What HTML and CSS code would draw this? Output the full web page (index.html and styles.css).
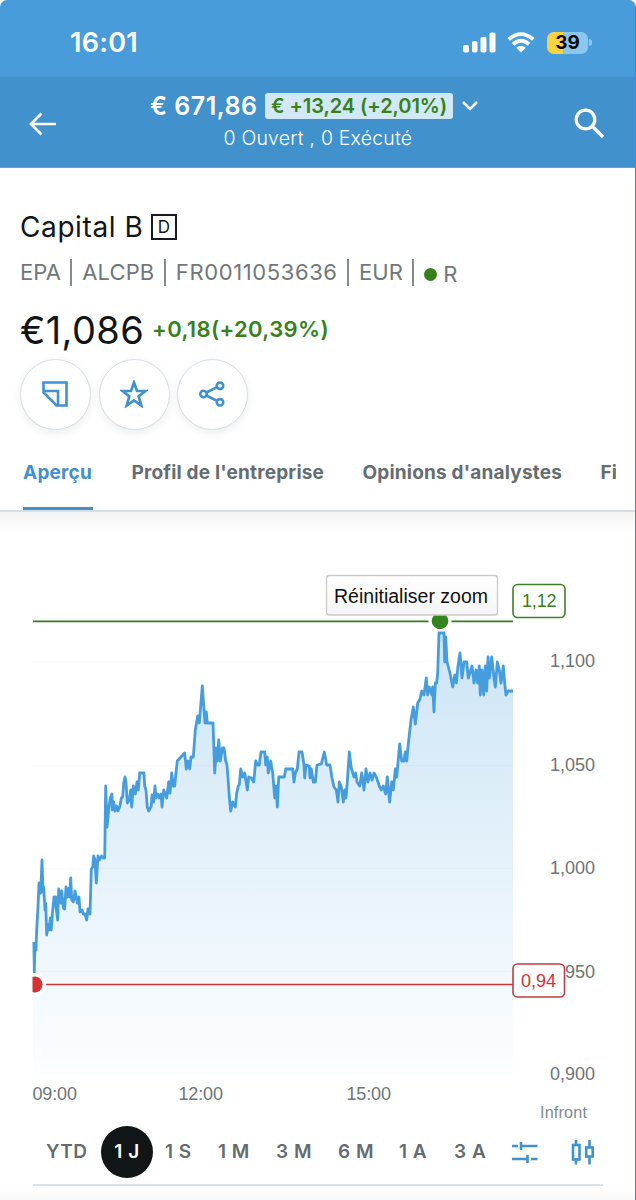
FILE: index.html
```html
<!DOCTYPE html>
<html lang="fr">
<head>
<meta charset="utf-8">
<title>Capital B</title>
<link rel="stylesheet" href="styles.css">
</head>
<body>
<div class="phone">
  <div class="statusbar">
    <span class="clock">16:01</span>
    <div class="indicators">
      <svg class="signal" width="33" height="21" viewBox="0 0 33 21" fill="#fff"><rect x="0" y="13" width="6" height="7.500" rx="1.800"/><rect x="9" y="9" width="5.500" height="11.500" rx="1.800"/><rect x="17.500" y="5" width="6" height="15.500" rx="1.800"/><rect x="26.500" y="0.500" width="6" height="20" rx="1.800"/></svg>
      <svg class="wifi" width="28" height="21" viewBox="0 0 28 21" fill="none" stroke="#fff" stroke-width="3.800"><path d="M1.700 7.400Q14-3.200 26.300 7.400"/><path d="M6 12.200Q14 5.200 22 12.200"/><path d="M14 20.500L9.200 15.800Q14 11.900 18.800 15.800Z" fill="#fff" stroke="none"/></svg>
      <div class="battery"><span>39</span></div>
      <i class="battery-tip"></i>
    </div>
  </div>
  <header class="account">
    <svg class="back" width="28" height="24" viewBox="0 0 28 24" fill="none" stroke="#fff" stroke-width="2.700"><path d="M27 12H2M12.500 1.500L2 12L12.500 22.500"/></svg>
    <div class="balance">
      <div class="balance-row"><span class="amount">€ 671,86</span><span class="gain">€ +13,24 (+2,01%)</span>
        <svg width="16" height="10" viewBox="0 0 16 10" fill="none" stroke="#fff" stroke-width="2.500"><path d="M1 1L8 8L15 1"/></svg>
      </div>
      <div class="orders">0 Ouvert , 0 Exécuté</div>
    </div>
    <svg class="search" width="31" height="31" viewBox="0 0 31 31" fill="none" stroke="#fff" stroke-width="3.200"><circle cx="11.500" cy="11.500" r="9.300"/><path d="M18 18L29 29"/></svg>
  </header>

  <section class="quote">
    <div class="name-row"><h1>Capital B</h1><span class="doc">D</span></div>
    <div class="meta"><span>EPA</span><i></i><span class="ticker">ALCPB</span><i></i><span class="isin">FR0011053636</span><i></i><span>EUR</span><i></i><b></b><span class="rt">R</span></div>
    <div class="price-row"><span class="price">€1,086</span><span class="change">+0,18(+20,39%)</span></div>
    <div class="actions">
      <button><svg width="26" height="26" viewBox="0 0 26 26" fill="none" stroke="#3f91cf" stroke-width="2.600"><path d="M1.500 1.500H24.500V24.500H14.500L1.500 11.500Z"/><path d="M1.500 10H16V24.500"/></svg></button>
      <button><svg width="28" height="28" viewBox="0 0 28 28" fill="none" stroke="#3f91cf" stroke-width="2.700"><path d="M14 2.500L17 11H25.500L18.700 16.300L21.300 25.500L14 20.300L6.700 25.500L9.300 16.300L2.500 11H11Z"/></svg></button>
      <button><svg width="26" height="26" viewBox="0 0 26 26" fill="none" stroke="#3f91cf" stroke-width="2.600"><circle cx="4.500" cy="13" r="3.200"/><circle cx="21" cy="4.700" r="3.200"/><circle cx="21" cy="21.300" r="3.200"/><path d="M7.400 11.500L18.100 6.200M7.400 14.500L18.100 19.800"/></svg></button>
    </div>
  </section>

  <nav class="tabs">
    <a class="active">Aperçu</a><a class="company">Profil de l'entreprise</a><a class="analysts">Opinions d'analystes</a><a class="cut">Fi</a>
  </nav>

  <section class="chart">
    <svg width="636" height="611" viewBox="0 512 636 611">
      <defs>
        <linearGradient id="area" gradientUnits="userSpaceOnUse" x1="0" y1="620" x2="0" y2="1075"><stop offset="0" stop-color="#cbe4f5"/><stop offset="1" stop-color="#fcfeff"/></linearGradient>
        <linearGradient id="btn" x1="0" y1="0" x2="0" y2="1"><stop offset="0" stop-color="#fff"/><stop offset="1" stop-color="#f5f5f6"/></linearGradient>
        <clipPath id="plot"><rect x="32.500" y="560" width="480.500" height="520"/></clipPath>
      </defs>
      <g clip-path="url(#plot)">
        <path id="fill" fill="url(#area)"/>
        <path d="M33 661.500H513M33 765.500H513M33 868.500H513M33 971.500H513" stroke="#6a8ca3" stroke-opacity=".04"/>
        <path id="line" fill="none" stroke="#469dde" stroke-width="2.800" stroke-linejoin="round"/>
        <circle cx="34.500" cy="984.500" r="11.500" fill="#fff" fill-opacity=".85"/>
        <circle cx="34.500" cy="984.500" r="8" fill="#d33332"/>
      </g>
      <path d="M33 621.300H428.500M451.500 621.300H513" stroke="#39791f" stroke-width="1.700"/>
      <path d="M46 984.500H513" stroke="#c63a3d" stroke-width="1.700"/>
      <circle cx="440" cy="621" r="8.300" fill="#35851e"/>
      <rect x="326.500" y="575.500" width="171" height="39.500" rx="3" fill="url(#btn)" stroke="#cbc9ca" stroke-width="1.300"/>
      <g class="axis" font-size="18">
        <text x="334" y="602.500" textLength="154" class="reset">Réinitialiser zoom</text>
        <text x="550" y="666.500" textLength="45">1,100</text>
        <text x="550" y="770.500" textLength="45">1,050</text>
        <text x="550" y="873.500" textLength="45">1,000</text>
        <text x="550" y="977.500" textLength="45">0,950</text>
        <text x="550" y="1080" textLength="45">0,900</text>
        <text x="32.500" y="1099.500" textLength="44.500">09:00</text>
        <text x="178.500" y="1099.500" textLength="44.500">12:00</text>
        <text x="346.500" y="1099.500" textLength="44.500">15:00</text>
        <text x="540" y="1117.500" textLength="47" class="source">Infront</text>
        <rect x="513" y="584.500" width="52" height="33" rx="4.500" fill="#fff" stroke="#3b8127" stroke-width="1.600"/>
        <text x="522" y="607" textLength="34.500" class="high">1,12</text>
        <rect x="513" y="964" width="51.500" height="33" rx="4.500" fill="#fff" stroke="#bd3d43" stroke-width="1.600"/>
        <text x="521" y="987" textLength="35" class="low">0,94</text>
      </g>
    </svg>
  </section>

  <div class="ranges">
    <span class="ytd">YTD</span><span class="sel">1 J</span><span class="s1">1 S</span><span class="m1">1 M</span><span class="m3">3 M</span><span class="m6">6 M</span><span class="a1">1 A</span><span class="a3">3 A</span>
    <svg class="settings" width="26" height="24" viewBox="0 0 26 24" stroke="#3f91cf" stroke-width="2.600"><path d="M0 6H6M9 2V10M9 6H25.500M0 19H15.500M15.500 15V23M19 19H25.500"/></svg>
    <svg class="candles" width="24" height="26" viewBox="0 0 24 26" fill="none" stroke="#3f91cf" stroke-width="2.600"><path d="M5 1V6M5 20.500V25.500M18.500 1V8M18.500 18V25.500"/><rect x="2" y="6" width="6.500" height="14.500"/><rect x="15.200" y="8.500" width="6.500" height="9"/></svg>
  </div>
  <div class="below"></div>
</div>
<script src="chart.js"></script>
</body>
</html>
```
FILE: styles.css
```css
* { box-sizing: border-box; }
body { margin: 0; background: #fff; font-family: Inter, sans-serif; }
.phone { width: 636px; height: 1200px; overflow: hidden; border-right: 1px solid #777c80; border-radius: 7px 7px 0 0; background: #fff; }
.phone span { white-space: nowrap; }
.statusbar { height: 77px; padding: 8px 43px 0 70px; background: #489cda; display: flex; align-items: center; justify-content: space-between; color: #fff; }
.clock { font-size: 27px; font-weight: 600; width: 70px; letter-spacing: .3px; }
.indicators { display: flex; align-items: center; }
.signal { margin-right: 11px; }
.wifi { margin-right: 12px; }
.battery { width: 41px; height: 22px; border-radius: 7px; background: linear-gradient(90deg, #fdd240 39%, #8bc7ef 39%); color: #080b0d; font-weight: 700; font-size: 19px; line-height: 22px; text-align: center; }
.battery-tip { width: 3px; height: 7px; margin-left: 1px; border-radius: 0 3px 3px 0; background: #8bc7ef; }
.account { height: 91px; background: #4191cc; border-bottom: 1px solid #62a2d2; color: #fff; display: flex; padding: 0 30px 0 29px; }
.back { margin-top: 35px; }
.balance { flex: 1; padding: 14px 0 0 93px; }
.balance-row { display: flex; align-items: center; height: 30px; }
.amount { font-size: 25px; font-weight: 600; width: 115px; letter-spacing: .5px; }
.gain { width: 188px; height: 26px; line-height: 26px; border-radius: 3px; background: #d2e8f4; color: #37801c; font-size: 20px; font-weight: 600; letter-spacing: -.08px; padding-left: 6px; margin-right: 9px; }
.orders { font-size: 19.500px; font-weight: 300; letter-spacing: .2px; margin: 5px 0 0 73.500px; line-height: 24px; }
.search { margin-top: 31px; }

.quote { height: 266px; padding: 40px 20px 0; color: #111517; }
.name-row { display: flex; align-items: center; height: 38px; }
h1 { font-size: 28px; font-weight: 400; letter-spacing: .6px; margin: 0; width: 131px; white-space: nowrap; }
.doc { width: 26px; height: 26px; border: 2px solid #181c1e; font-size: 17px; font-weight: 400; line-height: 22px; text-align: center; }
.meta { display: flex; align-items: center; height: 52px; color: #70777b; font-size: 22px; font-weight: 400; }
.ticker { letter-spacing: .1px; }
.isin { letter-spacing: .6px; }
.meta i { width: 2px; height: 27px; margin: 0 10px 0 9.500px; background: #858b8f; }
.meta b { width: 13px; height: 13px; border-radius: 50%; background: #37801c; margin: 4px 6px 0 0; }
.rt { margin-top: 4px; }
.price-row { display: flex; align-items: center; height: 63px; }
.price { font-size: 38px; width: 132px; letter-spacing: .4px; }
.change { color: #37801c; font-size: 22px; font-weight: 600; letter-spacing: .35px; padding-bottom: 2px; }
.actions { display: flex; gap: 7.500px; margin-top: -2px; }
.actions button { width: 71px; height: 71px; padding: 0 1px 2px 0; border: 1.500px solid #d8dfe5; border-radius: 50%; background: #fff; box-shadow: 0 3px 8px rgba(30, 40, 60, .09); display: flex; align-items: center; justify-content: center; }

.tabs { height: 78px; display: flex; padding: 0 19px 0 23px; overflow: hidden; border-bottom: 2px solid #d5dfe6; color: #656d72; font-size: 19px; font-weight: 700; letter-spacing: .19px; line-height: 78px; }
.tabs a { white-space: nowrap; flex: none; }
.tabs .active { width: 70px; margin-right: 38.500px; color: #438fc8; box-shadow: inset 0 -3px #438fc8; }
.company { width: 231px; }
.analysts { width: 238px; }
.tabs .cut { width: 15px; overflow: hidden; }

.chart { height: 611px; background: linear-gradient(#f4f4f5, #fff 22px); }
.chart svg { display: block; }
.axis { font-family: "Liberation Sans", Arial, sans-serif; fill: #6f7477; }
.axis .reset { fill: #111; font-size: 19.500px; }
.axis .source { fill: #85898c; font-size: 16.200px; }
.axis .high { fill: #37801c; }
.axis .low { fill: #cb333a; }

.ranges { height: 63px; margin: 0 32px 0 33px; border-bottom: 2px solid #dce1e6; display: flex; align-items: center; color: #646c70; font-size: 19px; font-weight: 600; letter-spacing: .5px; padding: 0 0 4px 13px; }
.ranges span { flex: none; }
.ytd { width: 55px; }
.ranges .sel { width: 52px; height: 52px; line-height: 52px; border-radius: 50%; background: #101618; color: #fff; text-align: center; margin-right: 12px; }
.s1 { width: 53px; }
.m1 { width: 58px; }
.m3 { width: 62px; }
.m6 { width: 61px; }
.a1 { width: 55px; }
.a3 { width: 58px; }
.settings, .candles { flex: none; }
.settings { margin-right: 33px; }
.below { height: 14px; background: linear-gradient(#fff 20%, #f8f8f8); }
```
FILE: chart.js
```js
// Intraday price series as x,y pairs in plot coordinates.
const series = `33.3,942 34.3,972 35,943 36,950 36.7,930 38,907 39,883 40.700,893 42,860 43,892 43.700,887 45,910 45.700,903 46.700,935 48,925 49,930 50.300,918 51.300,930 52.700,910 54,897 55.700,897 56,907 57.700,920 58.700,889 60,897 61,903 61.700,891 63.300,908 64.700,909 66,887 67.300,897 69,888 69.500,897 70.700,878 71.700,900 73.300,902 75,891 77.300,903 79,897 80,912 82,910 83.300,914 85,914 86.700,920 88,909 90,914 91.300,869 92.700,867 93.700,856 95,860 96.300,883 98,856 99.300,860 101.700,856 103.300,858
104.700,858 105.700,786 107,827 109,807 110.300,798 112,794 112.300,810 113.700,802 115,811 116.700,806 118,811 120,806 121.300,798 122.700,797 123.700,783 125,777 126,782 127.300,803 129.300,800 130.700,790 131.700,807 133.300,786 135.300,794 137,782 138.300,790 139.700,773 144,773 144.700,786 146,790 147.300,807 148.700,811 151.300,806 152,795 153.700,802 155,786 156,798 157.700,794 159.300,798 161,794 162,807 163.700,790 165.300,794 166.700,798 168.700,782 170,793 171.700,773 173.300,786 174.700,786 176,773 177.300,761 180,758 184.700,753 186.300,769 188,761 189.700,769 191,757 193.300,757
195.300,730 197.700,716 199.300,723 202.300,686 205,723 206.300,712 207.300,723 213,723 214.700,773 216.300,748 217.300,761 218.700,740 220.300,761 222.300,748 224,748 225.700,761 227,765 228,778 229.300,797 230.700,811 232.700,802 235.300,807 236.700,793 238.300,786 239.300,785 240.700,769 242.700,777 244.700,773 247.300,790 248.700,777 251.300,778 253.700,782 255.700,761 257.700,765 259.300,765 261,752 264.700,752 265.700,765 267.300,757 268.300,773 270.700,761 272.700,773 274.700,798 276,786 277.300,807 278.700,777 284.300,777 285.700,769 292.700,769 294,782 295.300,773 297.300,769 299,752 302,752 304,765 304.700,778 306,765 309.300,766 310,778 311.300,769 313.300,782 315.300,782 317,765 321.300,764 324.300,752 326.700,765
330,765 332,778 334,787 336.300,790 338,802 339.300,782 341.300,787 343.300,802 344.700,790 346,798 347.300,782 349.300,752 351.300,768 354,777 355.700,773 357,782 359.700,786 361.700,773 364,790 366,769 368,782 370,773 372,780 374,773 376.700,778 379.300,786 381.300,790 383.300,786 385.700,794 387.300,777 389.700,802 391.700,782 393.300,790 395.300,769 396.700,777 399.700,744 401.700,761 404,761 405.300,752 406.700,761 408.300,744 411,720 413.300,707 415.300,724 417.700,703 420,699 421.700,691 424,695 426.300,678 427.700,695 429.300,687 432,695 432.700,687 434,712 435.300,683 436.700,683 437.700,673 439,633 444,633 444.700,662 445.700,637 447,662 450,673 452.700,687 454.700,675 456.300,683 458,666 460,653 462,678 464,662 466.700,662 468.300,678 472,666 474,683 476,670 477.700,683 479.300,666 480.300,695 482,670 483.700,695 485.300,666 486.700,691 488,657 489.300,678 491.700,657 494,678 495.300,687 497.300,662 499.300,670 501,683 503.300,666 504.700,683 506,695 508,691 513,691`.trim().split(/\s+/);
const line = "M" + series.join("L");
document.getElementById("line").setAttribute("d", line);
document.getElementById("fill").setAttribute("d", line + "V1075H33Z");
```
